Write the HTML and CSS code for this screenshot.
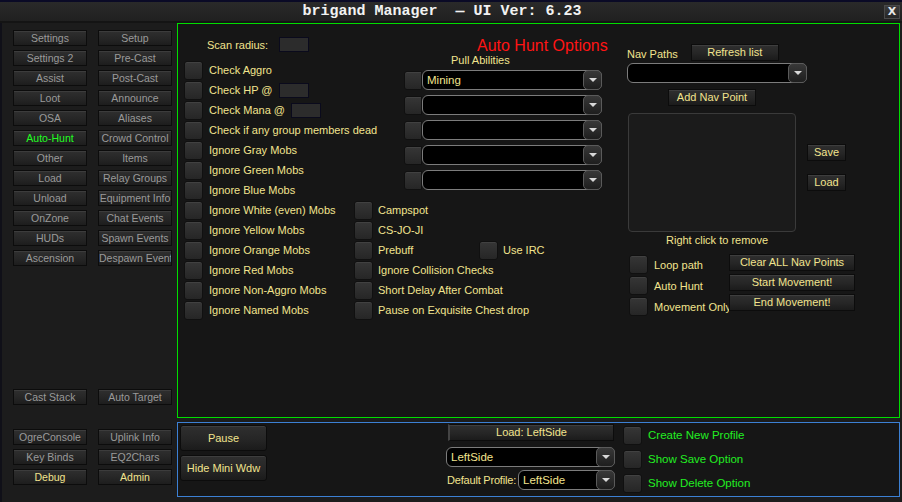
FILE: index.html
```html
<html lang="en">
<head>
  <meta charset="UTF-8">
  <meta name="viewport" content="width=device-width, initial-scale=1.0">
  <title>brigand Manager</title>
  <link rel="stylesheet" href="styles.css">
</head>
<body>
  <div class="window">
    <header class="titlebar">
      <div class="title">brigand Manager  — UI Ver: 6.23</div>
      <button class="close">X</button>
    </header>

    <div class="frame">
      <nav class="sidebar">
        <div class="tab-grid">
          <button class="tab">Settings</button>
          <button class="tab">Setup</button>
          <button class="tab">Settings 2</button>
          <button class="tab">Pre-Cast</button>
          <button class="tab">Assist</button>
          <button class="tab">Post-Cast</button>
          <button class="tab">Loot</button>
          <button class="tab">Announce</button>
          <button class="tab">OSA</button>
          <button class="tab">Aliases</button>
          <button class="tab active">Auto-Hunt</button>
          <button class="tab">Crowd Control</button>
          <button class="tab">Other</button>
          <button class="tab">Items</button>
          <button class="tab">Load</button>
          <button class="tab">Relay Groups</button>
          <button class="tab">Unload</button>
          <button class="tab">Equipment Info</button>
          <button class="tab">OnZone</button>
          <button class="tab">Chat Events</button>
          <button class="tab">HUDs</button>
          <button class="tab">Spawn Events</button>
          <button class="tab">Ascension</button>
          <button class="tab">Despawn Event</button>
        </div>
        <div class="tab-grid tab-grid-mid">
          <button class="tab">Cast Stack</button>
          <button class="tab">Auto Target</button>
        </div>
        <div class="tab-grid tab-grid-end">
          <button class="tab">OgreConsole</button>
          <button class="tab">Uplink Info</button>
          <button class="tab">Key Binds</button>
          <button class="tab">EQ2Chars</button>
          <button class="tab tab-yellow">Debug</button>
          <button class="tab tab-yellow">Admin</button>
        </div>
      </nav>

      <main class="content">
        <section class="panel panel-hunt">
          <div class="col-checks">
            <div class="scan-row">
              <span>Scan radius:</span>
              <span class="field"></span>
            </div>
            <label class="check"><span class="box"></span>Check Aggro</label>
            <label class="check"><span class="box"></span>Check HP @<span class="field"></span></label>
            <label class="check"><span class="box"></span>Check Mana @ <span class="field"></span></label>
            <label class="check"><span class="box"></span>Check if any group members dead</label>
            <label class="check"><span class="box"></span>Ignore Gray Mobs</label>
            <label class="check"><span class="box"></span>Ignore Green Mobs</label>
            <label class="check"><span class="box"></span>Ignore Blue Mobs</label>
            <label class="check"><span class="box"></span>Ignore White (even) Mobs</label>
            <label class="check"><span class="box"></span>Ignore Yellow Mobs</label>
            <label class="check"><span class="box"></span>Ignore Orange Mobs</label>
            <label class="check"><span class="box"></span>Ignore Red Mobs</label>
            <label class="check"><span class="box"></span>Ignore Non-Aggro Mobs</label>
            <label class="check"><span class="box"></span>Ignore Named Mobs</label>
          </div>

          <div class="col-pull">
            <h1 class="hunt-title">Auto Hunt Options</h1>
            <div class="pull-label">Pull Abilities</div>
            <div class="pull-list">
              <div class="pull-row">
                <span class="box box-pull"></span>
                <div class="combo"><span class="combo-text">Mining</span><span class="combo-btn"></span></div>
              </div>
              <div class="pull-row">
                <span class="box box-pull"></span>
                <div class="combo"><span class="combo-text"></span><span class="combo-btn"></span></div>
              </div>
              <div class="pull-row">
                <span class="box box-pull"></span>
                <div class="combo"><span class="combo-text"></span><span class="combo-btn"></span></div>
              </div>
              <div class="pull-row">
                <span class="box box-pull"></span>
                <div class="combo"><span class="combo-text"></span><span class="combo-btn"></span></div>
              </div>
              <div class="pull-row">
                <span class="box box-pull"></span>
                <div class="combo"><span class="combo-text"></span><span class="combo-btn"></span></div>
              </div>
            </div>
            <div class="extra-checks">
              <label class="check check-tight"><span class="box"></span>Campspot</label>
              <label class="check check-tight"><span class="box"></span>CS-JO-JI</label>
              <div class="check-pair">
                <label class="check check-tight check-wide"><span class="box"></span>Prebuff</label>
                <label class="check check-tight"><span class="box"></span>Use IRC</label>
              </div>
              <label class="check check-tight"><span class="box"></span>Ignore Collision Checks</label>
              <label class="check check-tight"><span class="box"></span>Short Delay After Combat</label>
              <label class="check check-tight"><span class="box"></span>Pause on Exquisite Chest drop</label>
            </div>
          </div>

          <div class="col-nav">
            <div class="nav-head">
              <span>Nav Paths</span>
              <button class="btn btn-refresh">Refresh list</button>
            </div>
            <div class="combo combo-nav"><span class="combo-text"></span><span class="combo-btn"></span></div>
            <button class="btn btn-addnav">Add Nav Point</button>
            <div class="nav-list-row">
              <div class="listbox"></div>
              <div class="nav-side">
                <button class="btn btn-small">Save</button>
                <button class="btn btn-small">Load</button>
              </div>
            </div>
            <div class="hint">Right click to remove</div>
            <div class="nav-foot">
              <div class="nav-checks">
                <label class="check check-nav"><span class="box"></span>Loop path</label>
                <label class="check check-nav"><span class="box"></span>Auto Hunt</label>
                <label class="check check-nav"><span class="box"></span>Movement Only</label>
              </div>
              <div class="nav-actions">
                <button class="btn btn-wide">Clear ALL Nav Points</button>
                <button class="btn btn-wide">Start Movement!</button>
                <button class="btn btn-wide">End Movement!</button>
              </div>
            </div>
          </div>
        </section>

        <section class="panel panel-profile">
          <div class="profile-left">
            <button class="btn btn-big">Pause</button>
            <button class="btn btn-big">Hide Mini Wdw</button>
          </div>
          <div class="profile-mid">
            <button class="btn btn-load">Load: LeftSide</button>
            <div class="combo combo-profile"><span class="combo-text">LeftSide</span><span class="combo-btn"></span></div>
            <div class="default-row">
              <span class="default-label">Default Profile:</span>
              <div class="combo combo-default"><span class="combo-text">LeftSide</span><span class="combo-btn"></span></div>
            </div>
          </div>
          <div class="profile-right">
            <label class="check check-green"><span class="box"></span>Create New Profile</label>
            <label class="check check-green"><span class="box"></span>Show Save Option</label>
            <label class="check check-green"><span class="box"></span>Show Delete Option</label>
          </div>
        </section>
      </main>
    </div>
  </div>
</body>
</html>
```

FILE: styles.css
```css
* {
  box-sizing: border-box;
  margin: 0;
  padding: 0;
}

body {
  width: 902px;
  height: 502px;
  overflow: hidden;
  background: #1c1c1c;
  font-family: "Liberation Sans", Arial, sans-serif;
  font-size: 11px;
  color: #f2e48e;
}

button {
  font-family: inherit;
  cursor: pointer;
}

.window {
  width: 902px;
  height: 502px;
  display: flex;
  flex-direction: column;
  border-left: 2px solid #101018;
  background: #1c1c1c;
}

/* title bar */
.titlebar {
  height: 23px;
  display: flex;
  align-items: center;
  border-top: 2px solid #0a0a26;
  border-bottom: 2px solid #141414;
  background: linear-gradient(#2a2a2a, #202020);
  margin-left: -2px;
}

.title {
  flex: 1;
  text-align: center;
  white-space: pre;
  font-family: "Liberation Mono", "Courier New", monospace;
  font-weight: bold;
  font-size: 15px;
  line-height: 19px;
  color: #f2f2f2;
}

.close {
  width: 16px;
  height: 14px;
  margin-right: 2px;
  background: linear-gradient(#3c3c3c, #262626);
  border: 1px solid #4a4a4a;
  color: #e8e8e8;
  font-family: "DejaVu Sans", sans-serif;
  font-size: 11px;
  font-weight: bold;
  line-height: 12px;
}

.frame {
  flex: 1;
  display: flex;
}

/* sidebar tabs */
.sidebar {
  width: 175px;
  padding: 7px 0 0 11px;
  display: flex;
  flex-direction: column;
}

.tab-grid {
  display: grid;
  grid-template-columns: 74px 74px;
  grid-auto-rows: 16px;
  column-gap: 11px;
  row-gap: 4px;
}

.tab-grid-mid {
  margin-top: 123px;
}

.tab-grid-end {
  margin-top: 24px;
}

.tab {
  background: linear-gradient(#2f2f2f, #262626 55%, #1d1d1d);
  border: 1px solid #0c0c0c;
  box-shadow: inset 0 1px 0 #3c3c3c;
  color: #9a9a9a;
  font-size: 10.5px;
  line-height: 14px;
  white-space: nowrap;
  overflow: hidden;
}

.tab.active {
  color: #22ff22;
}

.tab.tab-yellow {
  color: #f2e48e;
}

/* content panels */
.content {
  width: 725px;
  display: flex;
  flex-direction: column;
  padding-right: 2px;
}

.panel {
  background: #161616;
}

.panel-hunt {
  height: 395px;
  border: 1px solid #00dd00;
  display: flex;
  padding: 13px 0 0 6px;
}

.panel-profile {
  height: 75px;
  margin-top: 4px;
  border: 1px solid #3c80d4;
  display: flex;
  padding: 1px 0 0 1px;
}

/* shared controls */
.check {
  height: 20px;
  display: flex;
  align-items: center;
  gap: 6px;
  white-space: nowrap;
}

.check-tight {
  gap: 5px;
}

.box {
  flex: none;
  width: 19px;
  height: 19px;
  background: linear-gradient(#363636, #262626);
  border: 1px solid #101010;
  border-radius: 3px;
  box-shadow: inset 0 1px 0 #414141;
}

.field {
  display: inline-block;
  width: 30px;
  height: 15px;
  background: #2c2c2c;
  border: 1px solid #0a0a1c;
}

.combo {
  display: flex;
  height: 20px;
  background: #000;
  border: 1px solid #7c7c7c;
  border-radius: 6px;
}

.combo-text {
  flex: 1;
  padding-left: 4px;
  line-height: 18px;
  font-size: 11.5px;
  white-space: nowrap;
  overflow: hidden;
}

.combo-btn {
  width: 19px;
  margin: -1px -1px -1px 0;
  background: linear-gradient(#383838, #1e1e1e);
  border: 1px solid #5a5a5a;
  border-radius: 5px;
  display: flex;
  align-items: center;
  justify-content: center;
}

.combo-btn::after {
  content: "";
  border-left: 4px solid transparent;
  border-right: 4px solid transparent;
  border-top: 4px solid #d8d8d8;
}

.btn {
  background: linear-gradient(#2f2f2f, #262626 55%, #1b1b1b);
  border: 1px solid #0c0c0c;
  box-shadow: inset 0 1px 0 #3e3e3e;
  color: #f2e48e;
  font-size: 11px;
  line-height: 15px;
  white-space: nowrap;
}

/* left check column */
.col-checks {
  width: 170px;
  display: flex;
  flex-direction: column;
}

.scan-row {
  height: 15px;
  margin-bottom: 8px;
  padding-left: 23px;
  display: flex;
  align-items: center;
  gap: 11px;
}

/* pull abilities column */
.col-pull {
  width: 273px;
  display: flex;
  flex-direction: column;
}

.hunt-title {
  padding-left: 123px;
  font-weight: normal;
  font-size: 16px;
  line-height: 17px;
  color: #ff1414;
  white-space: nowrap;
}

.pull-label {
  padding-left: 97px;
  line-height: 13px;
}

.pull-list {
  margin-top: 3px;
  padding-left: 50px;
  display: flex;
  flex-direction: column;
  gap: 5px;
}

.pull-row {
  display: flex;
  align-items: center;
}

.box-pull {
  width: 18px;
  border-radius: 3px 0 0 3px;
}

.pull-row .combo {
  width: 180px;
}

.extra-checks {
  margin-top: 10px;
  display: flex;
  flex-direction: column;
}

.check-pair {
  display: flex;
}

.check-wide {
  width: 125px;
}

/* nav paths column */
.col-nav {
  width: 272px;
  padding-top: 7px;
  display: flex;
  flex-direction: column;
  align-items: flex-start;
}

.nav-head {
  height: 17px;
  display: flex;
  align-items: flex-end;
  line-height: 13px;
}

.btn-refresh {
  width: 88px;
  height: 17px;
  margin-left: 13px;
}

.combo-nav {
  width: 180px;
  margin-top: 2px;
}

.btn-addnav {
  width: 88px;
  height: 17px;
  margin: 6px 0 0 41px;
}

.nav-list-row {
  margin-top: 7px;
  display: flex;
}

.listbox {
  width: 168px;
  height: 119px;
  margin-left: 1px;
  background: #1b1b1b;
  border: 1px solid #3a3a3a;
  border-radius: 4px;
}

.nav-side {
  margin-left: 11px;
  padding-top: 31px;
  display: flex;
  flex-direction: column;
  gap: 13px;
}

.btn-small {
  width: 39px;
  height: 17px;
}

.hint {
  margin: 2px 0 0 39px;
  line-height: 13px;
}

.nav-foot {
  margin-top: 7px;
  display: flex;
}

.nav-checks {
  width: 102px;
  padding: 1px 0 0 2px;
  display: flex;
  flex-direction: column;
}

.check-nav {
  height: 21px;
  align-items: flex-start;
  line-height: 21px;
}

.nav-actions {
  display: flex;
  flex-direction: column;
  gap: 3px;
}

.btn-wide {
  width: 126px;
  height: 17px;
}

/* profile panel */
.profile-left {
  padding: 1px 0 0 1px;
  display: flex;
  flex-direction: column;
  gap: 4px;
}

.btn-big {
  width: 87px;
  height: 26px;
  border-radius: 3px;
}

.profile-mid {
  width: 169px;
  margin-left: 179px;
  display: flex;
  flex-direction: column;
}

.btn-load {
  width: 166px;
  height: 17px;
  margin-left: 2px;
  border-left: 2px solid #444;
}

.combo-profile {
  margin-top: 6px;
}

.default-row {
  margin-top: 3px;
  display: flex;
  align-items: center;
  justify-content: flex-end;
  gap: 2px;
}

.default-label {
  flex: none;
  white-space: nowrap;
  letter-spacing: -0.2px;
}

.combo-default {
  flex: none;
  width: 97px;
}

.profile-right {
  margin-left: 8px;
  padding-top: 1px;
  display: flex;
  flex-direction: column;
  gap: 4px;
}

.check-green {
  height: 20px;
  color: #22ee22;
  font-size: 11.5px;
}
```
